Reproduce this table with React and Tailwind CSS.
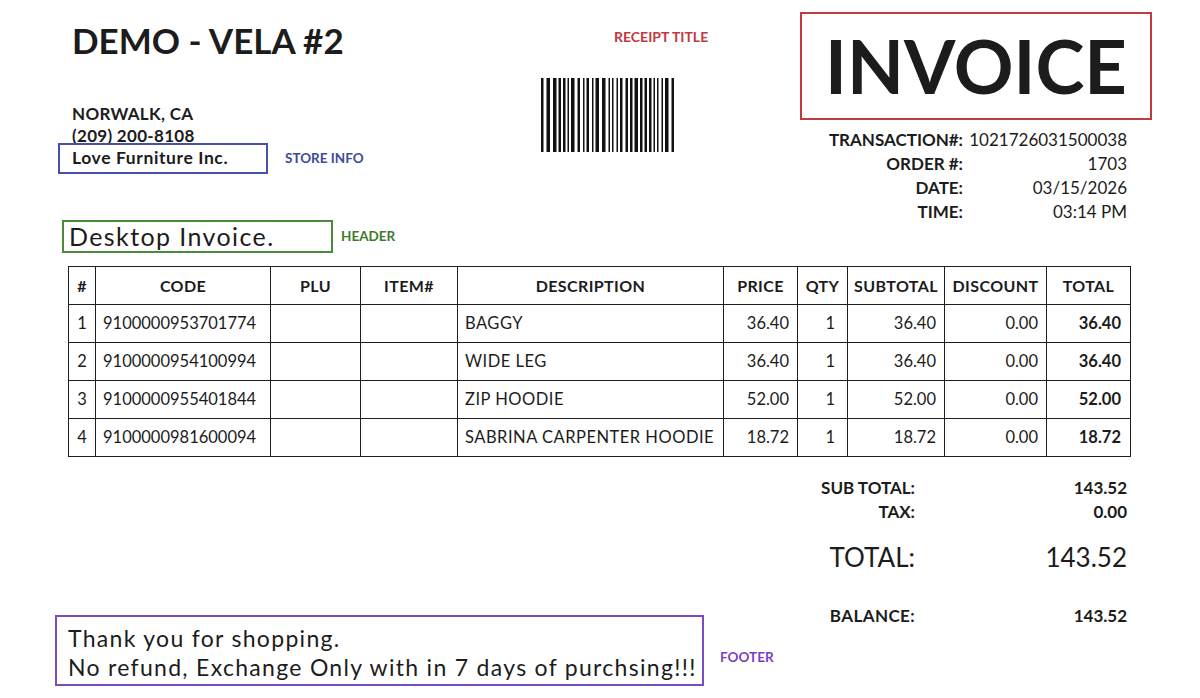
import React from "react";

const items = [
  { no: 1, code: "9100000953701774", desc: "BAGGY", price: "36.40", qty: 1, subtotal: "36.40", discount: "0.00", total: "36.40" },
  { no: 2, code: "9100000954100994", desc: "WIDE LEG", price: "36.40", qty: 1, subtotal: "36.40", discount: "0.00", total: "36.40" },
  { no: 3, code: "9100000955401844", desc: "ZIP HOODIE", price: "52.00", qty: 1, subtotal: "52.00", discount: "0.00", total: "52.00" },
  { no: 4, code: "9100000981600094", desc: "SABRINA CARPENTER HOODIE", price: "18.72", qty: 1, subtotal: "18.72", discount: "0.00", total: "18.72" },
];

const info = [
  ["TRANSACTION#:", "1021726031500038"],
  ["ORDER #:", "1703"],
  ["DATE:", "03/15/2026"],
  ["TIME:", "03:14 PM"],
];

const colWidths = [27, 175, 90, 97, 266, 74, 50, 97, 102, 84];

// fake barcode bars, deterministic
function barcodeBars(width) {
  const bars = [];
  let seed = 7;
  let x = 0;
  const next = () => {
    seed = (seed * 1103515245 + 12345) % 2147483648;
    return seed / 2147483648;
  };
  while (x < width) {
    const w = next() < 0.55 ? 1.5 : next() < 0.6 ? 2.5 : 3.5;
    if (x + w > width) break;
    bars.push({ x, w });
    x += w + (next() < 0.5 ? 2 : 3);
  }
  return bars;
}

function Barcode() {
  const bars = barcodeBars(136);
  return (
    <svg width="136" height="74" viewBox="0 0 136 74">
      {bars.map((b, i) => (
        <rect key={i} x={b.x} y="0" width={b.w} height="74" fill="#111" />
      ))}
    </svg>
  );
}

const th = "border-[1.5px] border-[#1e1e1e] h-[38px] text-[16px] tracking-[0.4px] font-bold text-center";
const td = "border-[1.5px] border-[#1e1e1e] h-[38px] text-[16.5px]";

export default function App() {
  return (
    <div className="w-[1200px] h-[698px] overflow-hidden bg-white text-[#1c1c1c] font-['Lato',sans-serif]">
      {/* top */}
      <div className="flex pt-[12px]">
        <div className="w-[541px] shrink-0 pl-[58px]">
          <h1 className="ml-[14px] mt-[10px] text-[35px] font-bold leading-[36px]">DEMO - VELA #2</h1>
          <div className="ml-[14px] mt-[45px] text-[17px] font-bold leading-[22px] tracking-[0.3px]">
            <div>NORWALK, CA</div>
            <div>(209) 200-8108</div>
          </div>
          <div className="-mt-[4px] flex items-center">
            <div className="flex h-[31px] w-[210px] items-center border-2 border-[#4650a6] pl-[12px] text-[17.5px] font-bold tracking-[0.6px]">
              Love Furniture Inc.
            </div>
            <span className="ml-[17px] text-[13.5px] font-bold text-[#3e4b9c]">STORE INFO</span>
          </div>
          <div className="ml-[4px] mt-[46px] flex items-center">
            <div className="flex h-[33px] w-[271px] items-center border-2 border-[#4a8a3c] pl-[5px] text-[25px] leading-none tracking-[1.4px]">
              Desktop Invoice.
            </div>
            <span className="ml-[8px] text-[13.5px] font-bold text-[#3e7a2c]">HEADER</span>
          </div>
        </div>

        <div className="w-[259px] shrink-0">
          <div className="ml-[73px] mt-[17px] text-[14px] font-bold leading-[16px] text-[#c4383e]">RECEIPT TITLE</div>
          <div className="mt-[33px]">
            <Barcode />
          </div>
        </div>

        <div className="w-[352px] shrink-0">
          <div className="flex h-[108px] items-center justify-center border-2 border-[#c23b40] text-[74px] font-bold leading-none">
            INVOICE
          </div>
          <div className="mt-[8px] grid grid-cols-[163px_164px] text-[17px] leading-[24px]">
            {info.map(([label, value]) => (
              <React.Fragment key={label}>
                <span className="text-right font-bold">{label}</span>
                <span className="text-right">{value}</span>
              </React.Fragment>
            ))}
          </div>
        </div>
      </div>

      {/* items table */}
      <table className="ml-[68px] mt-[13px] w-[1062px] table-fixed border-collapse">
        <colgroup>
          {colWidths.map((w, i) => (
            <col key={i} style={{ width: w }} />
          ))}
        </colgroup>
        <thead>
          <tr>
            <th className={th}>#</th>
            <th className={th}>CODE</th>
            <th className={th}>PLU</th>
            <th className={th}>ITEM#</th>
            <th className={th}>DESCRIPTION</th>
            <th className={th}>PRICE</th>
            <th className={th}>QTY</th>
            <th className={th}>SUBTOTAL</th>
            <th className={th}>DISCOUNT</th>
            <th className={th}>TOTAL</th>
          </tr>
        </thead>
        <tbody>
          {items.map((it) => (
            <tr key={it.no}>
              <td className={`${td} text-center`}>{it.no}</td>
              <td className={`${td} pl-[7px]`}>{it.code}</td>
              <td className={td}></td>
              <td className={td}></td>
              <td className={`${td} pl-[7px] tracking-[0.5px]`}>{it.desc}</td>
              <td className={`${td} pr-[8px] text-right`}>{it.price}</td>
              <td className={`${td} pr-[12px] text-right`}>{it.qty}</td>
              <td className={`${td} pr-[8px] text-right`}>{it.subtotal}</td>
              <td className={`${td} pr-[8px] text-right`}>{it.discount}</td>
              <td className={`${td} pr-[9px] text-right font-bold`}>{it.total}</td>
            </tr>
          ))}
        </tbody>
      </table>

      {/* footer + totals */}
      <div className="flex">
        <div className="ml-[55px] mt-[158px] flex items-center">
          <div className="h-[71px] w-[649px] border-2 border-[#7b4cc0] pl-[11px] pt-[7px] text-[23px] leading-[29px] tracking-[1.3px]">
            <div>Thank you for shopping.</div>
            <div>No refund, Exchange Only with in 7 days of purchsing!!!</div>
          </div>
          <span className="ml-[16px] mt-[14px] text-[13.5px] font-bold text-[#7a3fc0]">FOOTER</span>
        </div>

        <div className="ml-auto mr-[73px] mt-[19px]">
          <div className="flex text-[17px] font-bold leading-[24px]">
            <span className="w-[120px] text-right">SUB TOTAL:</span>
            <span className="w-[212px] text-right">143.52</span>
          </div>
          <div className="flex text-[17px] font-bold leading-[24px]">
            <span className="w-[120px] text-right">TAX:</span>
            <span className="w-[212px] text-right">0.00</span>
          </div>
          <div className="mt-[16px] flex text-[26px] leading-[34px]">
            <span className="w-[120px] text-right">TOTAL:</span>
            <span className="w-[212px] text-right">143.52</span>
          </div>
          <div className="mt-[30px] flex text-[17px] font-bold leading-[24px]">
            <span className="w-[120px] text-right tracking-[0.4px]">BALANCE:</span>
            <span className="w-[212px] text-right">143.52</span>
          </div>
        </div>
      </div>
    </div>
  );
}
